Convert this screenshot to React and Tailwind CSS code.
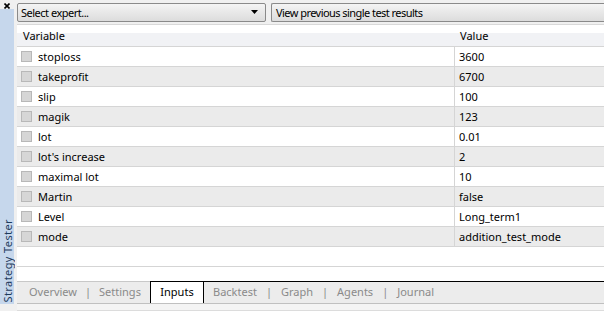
import React from 'react';

const rows = [
  ['stoploss', '3600'],
  ['takeprofit', '6700'],
  ['slip', '100'],
  ['magik', '123'],
  ['lot', '0.01'],
  ["lot's increase", '2'],
  ['maximal lot', '10'],
  ['Martin', 'false'],
  ['Level', 'Long_term1'],
  ['mode', 'addition_test_mode'],
];

export default function App() {
  return (
    <div
      className="w-[604px] h-[311px] overflow-hidden bg-[#f0f0f0] flex text-[11px] text-black"
      style={{ fontFamily: '"Segoe UI", "Noto Sans", "DejaVu Sans", sans-serif' }}
    >
      {/* left side panel */}
      <div className="w-[17px] shrink-0 flex flex-col">
        <div className="h-[9px] w-[14px] flex items-start justify-center pt-[3px]">
          <svg width="6" height="6" viewBox="0 0 6 6">
            <path d="M0.5 0.5L5.5 5.5M5.5 0.5L0.5 5.5" stroke="#000" strokeWidth="1.6" />
          </svg>
        </div>
        <div className="w-[14px] h-[295px] bg-[#c6d7ec] flex flex-col justify-end items-center pb-[2px]">
          <span className="[writing-mode:vertical-rl] rotate-180 text-[11px] leading-[13px] tracking-[0.4px] text-[#1e3a5c] whitespace-nowrap">
            Strategy Tester
          </span>
        </div>
      </div>

      <div className="flex-1 flex flex-col min-w-0">
        {/* top bar */}
        <div className="h-[25px] flex items-start pt-[3px] gap-[5px] border-b border-[#d9d9d9]">
          <div className="w-[249px] h-[19px] border border-[#8a8a8a] rounded-[2px] bg-gradient-to-b from-[#f4f4f4] to-[#dcdcdc] flex items-center justify-between pl-[3px] pr-[6px]">
            <span className="leading-none tracking-[-0.5px]">Select expert...</span>
            <svg width="8" height="5" viewBox="0 0 8 5"><path d="M0 0h7L3.5 4z" fill="#000" /></svg>
          </div>
          <div className="flex-1 h-[19px] border border-[#8a8a8a] rounded-l-[2px] border-r-0 bg-gradient-to-b from-[#f4f4f4] to-[#dcdcdc] flex items-center pl-[4px]">
            <span className="leading-none whitespace-nowrap tracking-[-0.55px]">View previous single test results</span>
          </div>
        </div>

        {/* table */}
        <div className="bg-white flex-1 flex flex-col">
          <div className="h-[22px] flex border-b border-[#d5d5d5] bg-gradient-to-b from-white from-40% to-[#f1f2f5] to-40%">
            <div className="w-[438px] pl-[6px] pt-[1px] flex items-center">Variable</div>
            <div className="flex-1 pl-[5px] pt-[1px] flex items-center">Value</div>
          </div>
          {rows.map(([name, value], i) => (
            <div
              key={name}
              className={`h-[20px] flex border-b border-[#d5d5d5] ${i % 2 === 1 ? 'bg-[#ebebeb]' : 'bg-white'}`}
            >
              <div className="w-[438px] flex items-center border-r border-[#d5d5d5] pl-[4px]">
                <span className="w-[11px] h-[11px] bg-[#d6d6d6] border border-[#b8b8b8] mr-[6px]" />
                <span className="pt-[2px]">{name}</span>
              </div>
              <div className="flex-1 pl-[4px] pt-[2px] flex items-center whitespace-nowrap">{value}</div>
            </div>
          ))}
          <div className="h-[20px] border-b border-[#d5d5d5]" />
          <div className="flex-1" />
        </div>

        {/* tabs */}
        <div className="h-[22px] flex items-stretch bg-[#ececec]">
          <div className="flex items-center pl-[12px] w-[133px] text-[#8a8a8a] border-t border-[#c8c8c8]">
            <span>Overview</span>
            <span className="mx-[8px]">|</span>
            <span>Settings</span>
          </div>
          <div className="w-[54px] bg-white border border-b-0 border-black flex items-center justify-center">Inputs</div>
          <div className="flex-1 flex items-center pl-[9px] text-[#8a8a8a] border-t border-black">
            <span>Backtest</span>
            <span className="mx-[9px]">|</span>
            <span>Graph</span>
            <span className="mx-[9px]">|</span>
            <span>Agents</span>
            <span className="mx-[9px]">|</span>
            <span>Journal</span>
          </div>
        </div>
        <div className="h-[8px] bg-[#f4f4f4] border-t border-[#c0c0c0] border-b border-b-[#dcdcdc]" />
      </div>
    </div>
  );
}
